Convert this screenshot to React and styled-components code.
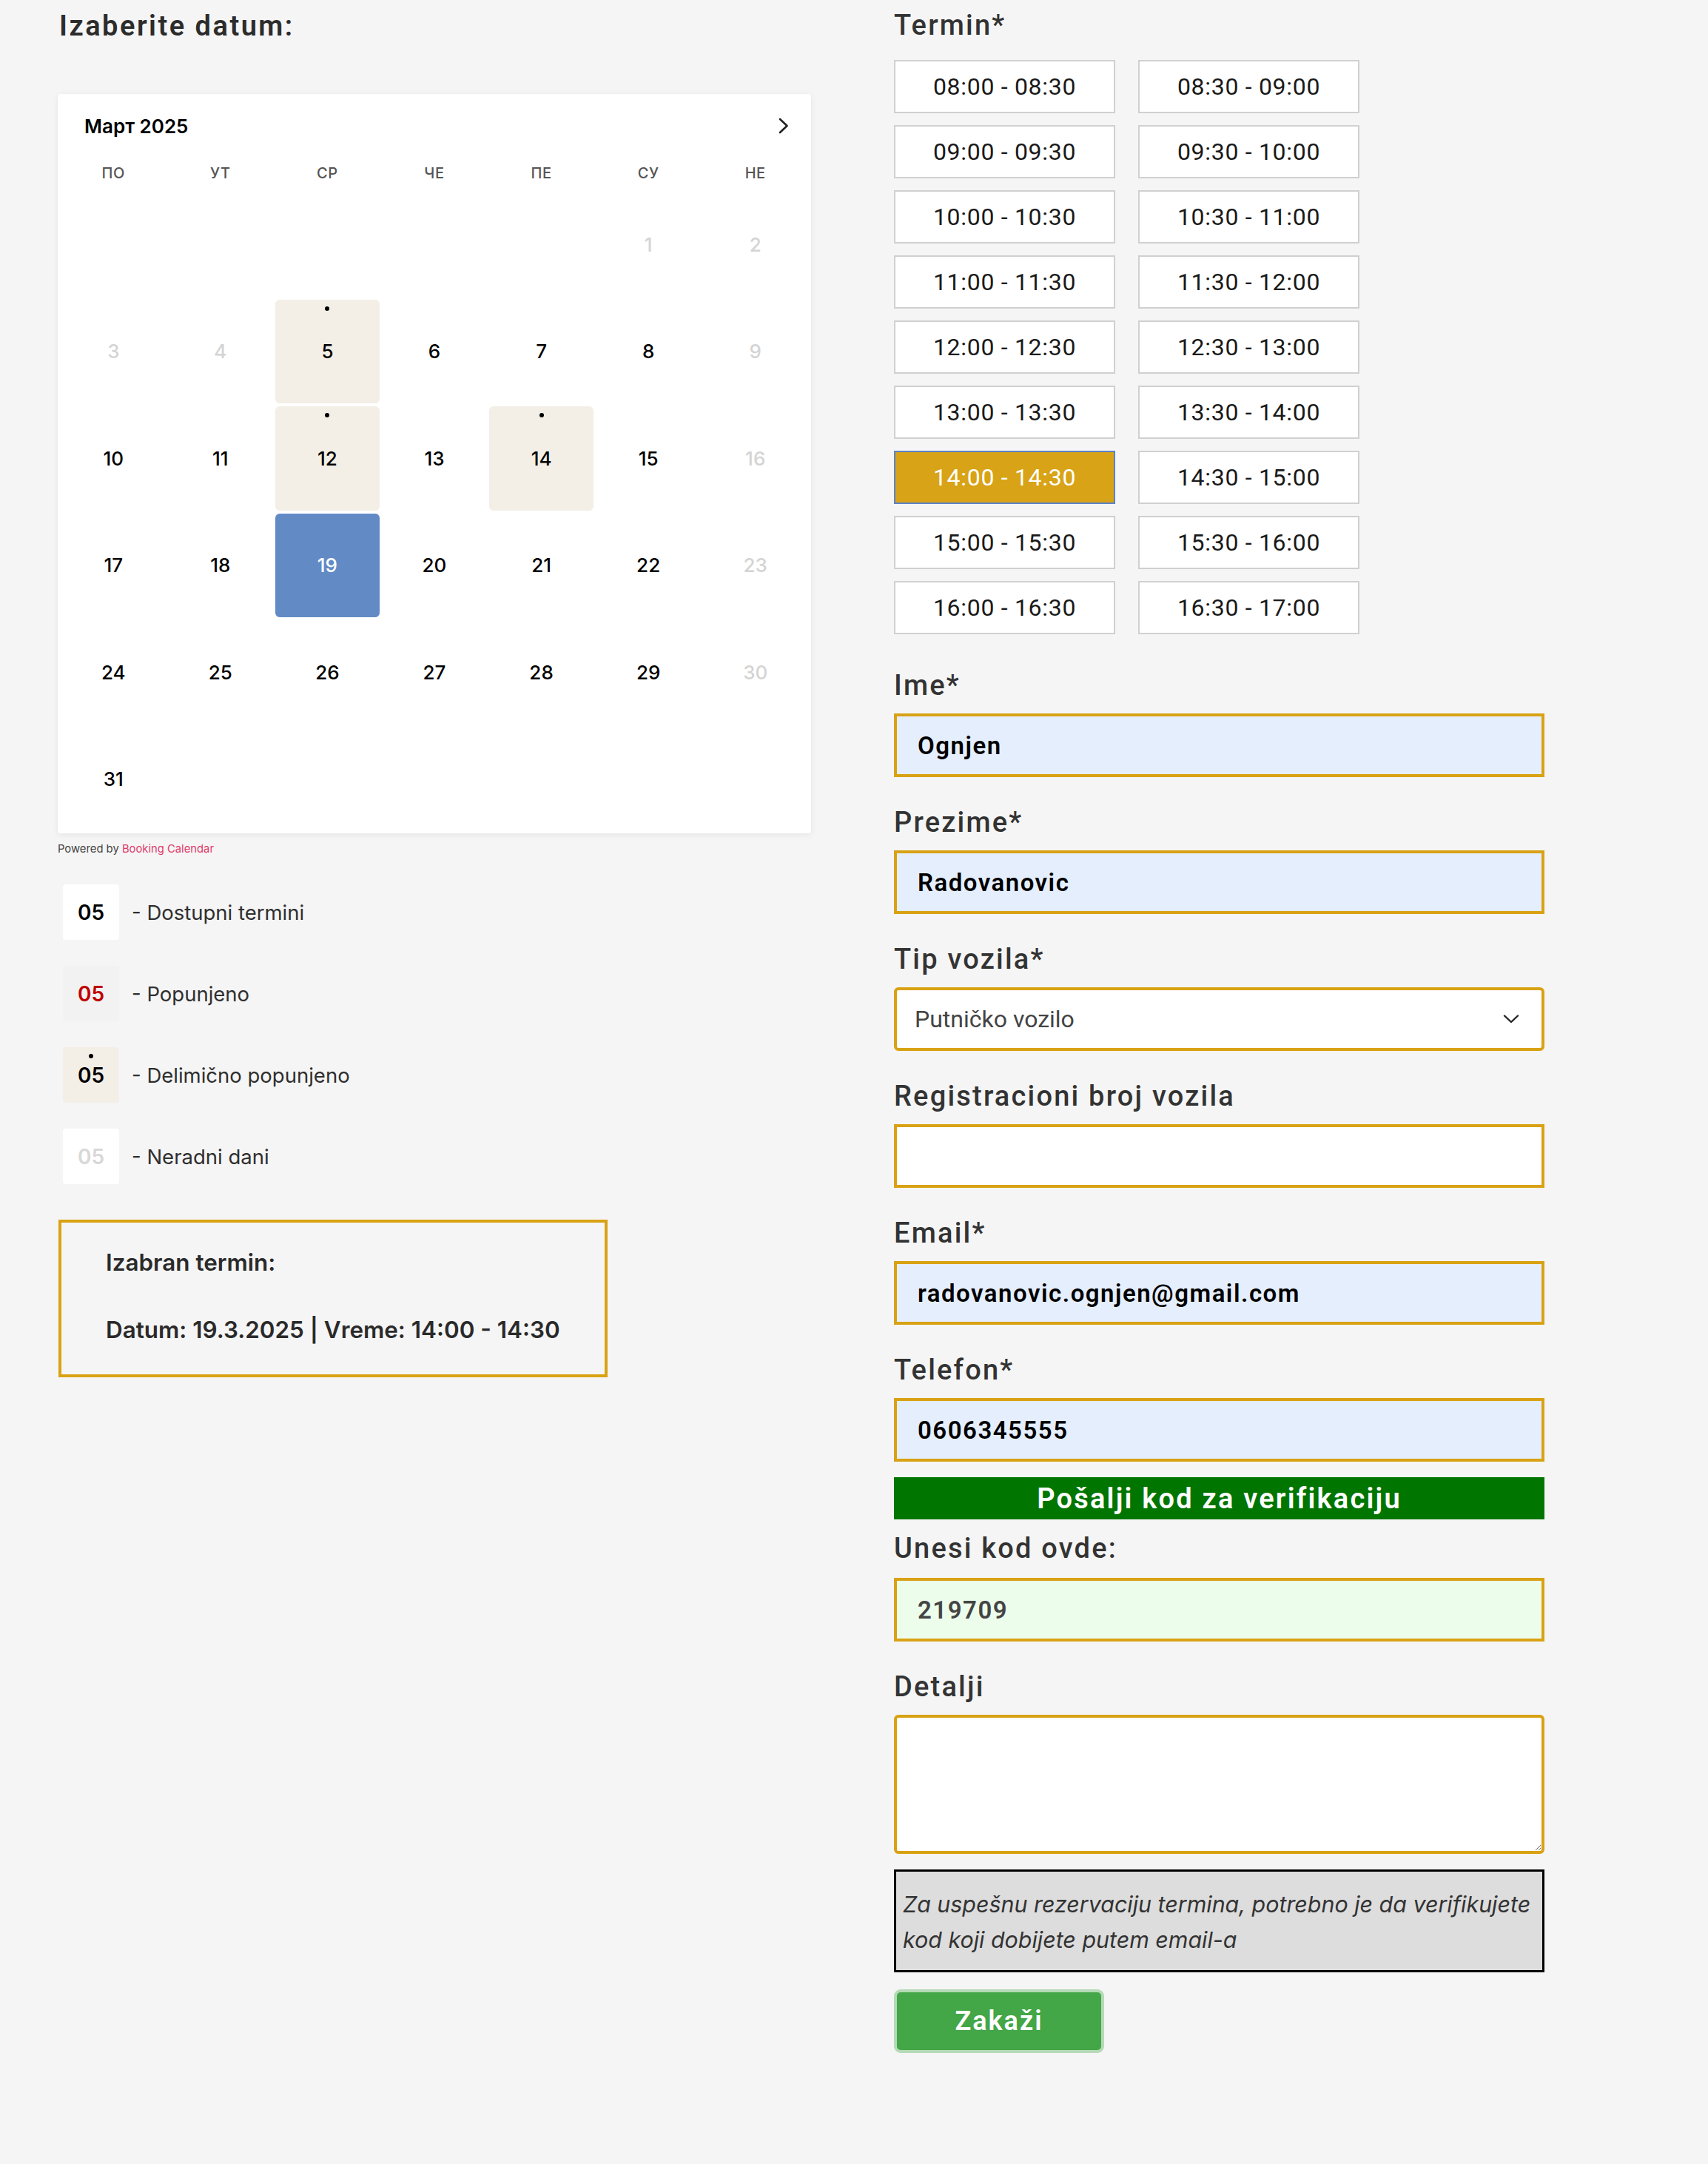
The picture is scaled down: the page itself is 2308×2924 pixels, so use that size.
import React from 'react'
import styled, { createGlobalStyle } from 'styled-components'

const GlobalStyle = createGlobalStyle`
  html, body {
    margin: 0;
    padding: 0;
    background: #f5f5f5;
  }
  * { box-sizing: border-box; }
`

const WEEKDAYS = ['ПО', 'УТ', 'СР', 'ЧЕ', 'ПЕ', 'СУ', 'НЕ']
const OFF_DAYS = [1, 2, 3, 4, 9, 16, 23, 30]
const PARTIAL_DAYS = [5, 12, 14]
const SELECTED_DAY = 19
const LEAD_BLANKS = 5

const SLOTS = [
  '08:00 - 08:30', '08:30 - 09:00',
  '09:00 - 09:30', '09:30 - 10:00',
  '10:00 - 10:30', '10:30 - 11:00',
  '11:00 - 11:30', '11:30 - 12:00',
  '12:00 - 12:30', '12:30 - 13:00',
  '13:00 - 13:30', '13:30 - 14:00',
  '14:00 - 14:30', '14:30 - 15:00',
  '15:00 - 15:30', '15:30 - 16:00',
  '16:00 - 16:30', '16:30 - 17:00',
]
const SELECTED_SLOT = '14:00 - 14:30'

const dayState = (d) => {
  if (d === SELECTED_DAY) return 'selected'
  if (OFF_DAYS.includes(d)) return 'off'
  if (PARTIAL_DAYS.includes(d)) return 'partial'
  return 'free'
}

const ChevronRight = () => (
  <svg width="16" height="22" viewBox="0 0 16 22" fill="none">
    <path d="M3 2 L12.5 11 L3 20" stroke="#222" strokeWidth="2.6" strokeLinecap="round" strokeLinejoin="round" />
  </svg>
)

const ChevronDown = () => (
  <svg width="22" height="14" viewBox="0 0 22 14" fill="none">
    <path d="M2 2.5 L11 11 L20 2.5" stroke="#222" strokeWidth="2.4" strokeLinecap="round" strokeLinejoin="round" />
  </svg>
)

const Calendar = () => {
  const cells = []
  for (let i = 0; i < LEAD_BLANKS; i++) cells.push(<Cell key={'b' + i} />)
  for (let d = 1; d <= 31; d++) {
    cells.push(
      <Cell key={d}>
        <Day $state={dayState(d)}>{d}</Day>
      </Cell>
    )
  }
  return (
    <Card>
      <CardHeader>
        <MonthTitle>Март 2025</MonthTitle>
        <ChevronRight />
      </CardHeader>
      <WeekRow>
        {WEEKDAYS.map((w) => (
          <WeekDay key={w}>{w}</WeekDay>
        ))}
      </WeekRow>
      <DayGrid>{cells}</DayGrid>
    </Card>
  )
}

const LEGEND = [
  { state: 'free', label: 'Dostupni termini' },
  { state: 'booked', label: 'Popunjeno' },
  { state: 'partial', label: 'Delimično popunjeno' },
  { state: 'off', label: 'Neradni dani' },
]

const FIELDS_TOP = [
  { label: 'Ime*', value: 'Ognjen', filled: true },
  { label: 'Prezime*', value: 'Radovanovic', filled: true },
]

const App = () => {
  return (
    <Page>
      <GlobalStyle />
      <LeftColumn>
        <Heading>Izaberite datum:</Heading>
        <Calendar />
        <Powered>
          Powered by <PoweredLink href="#">Booking Calendar</PoweredLink>
        </Powered>

        <Legend>
          {LEGEND.map((item) => (
            <LegendRow key={item.label}>
              <LegendBox $state={item.state}>05</LegendBox>
              <LegendText>- {item.label}</LegendText>
            </LegendRow>
          ))}
        </Legend>

        <SelectedBox>
          <SelectedLine>Izabran termin:</SelectedLine>
          <SelectedLine>Datum: 19.3.2025 | Vreme: 14:00 - 14:30</SelectedLine>
        </SelectedBox>
      </LeftColumn>

      <RightColumn>
        <Label $first>Termin*</Label>
        <SlotGrid>
          {SLOTS.map((s) => (
            <Slot key={s} type="button" $active={s === SELECTED_SLOT}>
              {s}
            </Slot>
          ))}
        </SlotGrid>

        {FIELDS_TOP.map((f) => (
          <Field key={f.label}>
            <Label>{f.label}</Label>
            <Input defaultValue={f.value} $bg="#e5eefd" />
          </Field>
        ))}

        <Field>
          <Label>Tip vozila*</Label>
          <SelectBox>
            <SelectValue>Putničko vozilo</SelectValue>
            <ChevronDown />
          </SelectBox>
        </Field>

        <Field>
          <Label>Registracioni broj vozila</Label>
          <Input defaultValue="" $bg="#ffffff" />
        </Field>

        <Field>
          <Label>Email*</Label>
          <Input defaultValue="radovanovic.ognjen@gmail.com" $bg="#e5eefd" />
        </Field>

        <Field>
          <Label>Telefon*</Label>
          <Input defaultValue="0606345555" $bg="#e5eefd" />
        </Field>

        <SendButton type="button">Pošalji kod za verifikaciju</SendButton>

        <CodeLabel>Unesi kod ovde:</CodeLabel>
        <Input defaultValue="219709" $bg="#edfdec" $color="#444" />

        <Field>
          <Label>Detalji</Label>
          <TextArea />
        </Field>

        <Note>
          Za uspešnu rezervaciju termina, potrebno je da verifikujete kod koji dobijete putem email-a
        </Note>

        <SubmitButton type="button">Zakaži</SubmitButton>
      </RightColumn>
    </Page>
  )
}

export default App

const Page = styled.div`
  display: flex;
  align-items: flex-start;
  gap: 112px;
  min-height: 2924px;
  padding-left: 78px;
  background: #f5f5f5;
`

const LeftColumn = styled.div`
  width: 1018px;
  display: flex;
  flex-direction: column;
`

const Heading = styled.h2`
  margin: 12px 0 69px 2px;
  height: 46px;
  line-height: 46px;
  font-family: Roboto, 'Liberation Sans', sans-serif;
  font-size: 38px;
  font-weight: 600;
  letter-spacing: 2.5px;
  color: #2c2c2c;
`

const Card = styled.div`
  height: 999px;
  padding: 0 3px;
  background: #ffffff;
  border-radius: 4px;
  box-shadow: 0 2px 8px rgba(0, 0, 0, 0.07);
  font-family: Inter, 'Liberation Sans', sans-serif;
`

const CardHeader = styled.div`
  height: 82px;
  display: flex;
  align-items: center;
  justify-content: space-between;
  padding: 4px 26px 0 33px;
`

const MonthTitle = styled.span`
  font-size: 26px;
  font-weight: 600;
  color: #000;
`

const WeekRow = styled.div`
  height: 49px;
  display: grid;
  grid-template-columns: repeat(7, 1fr);
  align-items: center;
`

const WeekDay = styled.span`
  text-align: center;
  font-size: 20px;
  font-weight: 500;
  letter-spacing: 0.6px;
  color: #555;
`

const DayGrid = styled.div`
  display: grid;
  grid-template-columns: repeat(7, 1fr);
  grid-auto-rows: 144.5px;
`

const Cell = styled.div`
  display: flex;
  padding: 2px;
`

const dayBg = {
  selected: '#628bc6',
  partial: '#f3efe7',
  free: 'transparent',
  off: 'transparent',
}

const dayColor = {
  selected: '#ffffff',
  partial: '#000000',
  free: '#000000',
  off: '#d4d4d4',
}

const Day = styled.div`
  position: relative;
  flex: 1;
  display: flex;
  align-items: center;
  justify-content: center;
  border-radius: 6px;
  background: ${(p) => dayBg[p.$state]};
  color: ${(p) => dayColor[p.$state]};
  font-size: 26px;
  font-weight: 500;

  &::before {
    content: '';
    display: ${(p) => (p.$state === 'partial' ? 'block' : 'none')};
    position: absolute;
    top: 9px;
    left: 50%;
    width: 6px;
    height: 6px;
    margin-left: -3px;
    border-radius: 50%;
    background: #000;
  }
`

const Powered = styled.div`
  margin-top: 10px;
  height: 22px;
  line-height: 22px;
  font-family: Inter, 'Liberation Sans', sans-serif;
  font-size: 14.8px;
  color: #444;
`

const PoweredLink = styled.a`
  color: #e03a6c;
  text-decoration: none;
`

const Legend = styled.div`
  margin-top: 37px;
  padding-left: 7px;
  display: flex;
  flex-direction: column;
  gap: 35px;
`

const LegendRow = styled.div`
  display: flex;
  align-items: center;
  gap: 17px;
`

const legendBg = {
  free: '#ffffff',
  booked: '#f2f2f2',
  partial: '#f3efe7',
  off: '#ffffff',
}

const legendColor = {
  free: '#000000',
  booked: '#c00000',
  partial: '#000000',
  off: '#d8d8d8',
}

const LegendBox = styled.div`
  position: relative;
  width: 76px;
  height: 75px;
  display: flex;
  align-items: center;
  justify-content: center;
  border-radius: 4px;
  background: ${(p) => legendBg[p.$state]};
  color: ${(p) => legendColor[p.$state]};
  font-family: Inter, 'Liberation Sans', sans-serif;
  font-size: 28px;
  font-weight: 600;

  &::before {
    content: '';
    display: ${(p) => (p.$state === 'partial' ? 'block' : 'none')};
    position: absolute;
    top: 9px;
    left: 50%;
    width: 6px;
    height: 6px;
    margin-left: -3px;
    border-radius: 50%;
    background: #000;
  }
`

const LegendText = styled.span`
  font-family: Inter, 'Liberation Sans', sans-serif;
  font-size: 27.5px;
  color: #2f2f2f;
`

const SelectedBox = styled.div`
  margin-top: 48px;
  margin-left: 1px;
  width: 742px;
  height: 213px;
  padding: 34px 0 0 60px;
  border: 4px solid #d9a214;
  display: flex;
  flex-direction: column;
  gap: 51px;
`

const SelectedLine = styled.p`
  margin: 0;
  height: 40px;
  line-height: 40px;
  font-family: Inter, 'Liberation Sans', sans-serif;
  font-size: 31.4px;
  font-weight: 600;
  color: #2a2a2a;
`

const RightColumn = styled.div`
  width: 879px;
  display: flex;
  flex-direction: column;
`

const Label = styled.label`
  display: block;
  margin: ${(p) => (p.$first ? '12px 0 25px' : '0 0 16px')};
  height: 44px;
  line-height: 44px;
  font-family: Roboto, 'Liberation Sans', sans-serif;
  font-size: 38px;
  font-weight: 500;
  letter-spacing: 2.2px;
  color: #333;
`

const SlotGrid = styled.div`
  display: grid;
  grid-template-columns: 299px 299px;
  grid-auto-rows: 72px;
  column-gap: 31px;
  row-gap: 16px;
  margin-bottom: 8px;
`

const Slot = styled.button`
  border: 2px solid ${(p) => (p.$active ? '#5a82c8' : '#d0d0d0')};
  background: ${(p) => (p.$active ? '#d8a316' : '#ffffff')};
  color: ${(p) => (p.$active ? '#ffffff' : '#1a1a1a')};
  font-family: Roboto, 'Liberation Sans', sans-serif;
  font-size: 32px;
  font-weight: 400;
  letter-spacing: 0.7px;
  padding: 0;
  cursor: pointer;
`

const Field = styled.div`
  margin-top: 39px;
  display: flex;
  flex-direction: column;
`

const Input = styled.input`
  width: 879px;
  height: 86px;
  padding: 0 0 0 28px;
  border: 4px solid #d9a214;
  background: ${(p) => p.$bg};
  color: ${(p) => p.$color || '#000'};
  font-family: Roboto, 'Liberation Sans', sans-serif;
  font-size: 33px;
  font-weight: 600;
  letter-spacing: 1.5px;
  outline: none;
`

const SelectBox = styled.div`
  height: 86px;
  display: flex;
  align-items: center;
  justify-content: space-between;
  padding: 0 30px 0 24px;
  border: 4px solid #d9a214;
  border-radius: 6px;
  background: #ffffff;
`

const SelectValue = styled.span`
  font-family: Roboto, 'Liberation Sans', sans-serif;
  font-size: 32px;
  font-weight: 400;
  color: #444;
`

const SendButton = styled.button`
  margin-top: 21px;
  height: 57px;
  border: none;
  background: #007500;
  color: #ffffff;
  font-family: Roboto, 'Liberation Sans', sans-serif;
  font-size: 38px;
  font-weight: 600;
  letter-spacing: 2.2px;
  padding: 0;
`

const CodeLabel = styled(Label)`
  margin-top: 17px;
  margin-bottom: 18px;
`

const TextArea = styled.textarea`
  width: 879px;
  height: 188px;
  border: 4px solid #d9a214;
  border-radius: 6px;
  background: #ffffff;
  outline: none;
  resize: vertical;
`

const Note = styled.div`
  margin-top: 21px;
  height: 139px;
  padding: 20px 8px 0 9px;
  border: 3px solid #000;
  background: #dddddd;
  font-family: Inter, 'Liberation Sans', sans-serif;
  font-size: 30.4px;
  font-style: italic;
  line-height: 48px;
  color: #333;
`

const SubmitButton = styled.button`
  margin-top: 23px;
  width: 284px;
  height: 86px;
  border: 4px solid #b5dab6;
  border-radius: 9px;
  background: #43a647;
  color: #ffffff;
  font-family: Roboto, 'Liberation Sans', sans-serif;
  font-size: 36px;
  font-weight: 600;
  letter-spacing: 2px;
  padding: 0;
`
